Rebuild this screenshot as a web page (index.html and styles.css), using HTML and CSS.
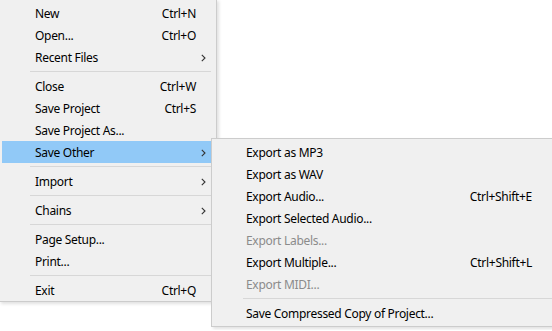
FILE: index.html
```html
<!DOCTYPE html>
<html lang="en">

<head>
    <meta charset="UTF-8">
    <title>File Menu</title>
    <link rel="stylesheet" href="styles.css">
</head>

<body>
    <div class="menu-area">
        <div class="menu main-menu">
            <div class="item"><span class="label">New</span><span class="keys">Ctrl+N</span><span class="arrow"></span></div>
            <div class="item"><span class="label">Open...</span><span class="keys">Ctrl+O</span><span class="arrow"></span></div>
            <div class="item"><span class="label">Recent Files</span><span class="keys"></span><span class="arrow"><svg width="5" height="8" viewBox="0 0 5 8"><path d="M0.8 0.8 L4 4 L0.8 7.2" fill="none" stroke="#333" stroke-width="1.1"/></svg></span></div>
            <div class="sep"></div>
            <div class="item"><span class="label">Close</span><span class="keys">Ctrl+W</span><span class="arrow"></span></div>
            <div class="item"><span class="label">Save Project</span><span class="keys">Ctrl+S</span><span class="arrow"></span></div>
            <div class="item"><span class="label">Save Project As...</span><span class="keys"></span><span class="arrow"></span></div>
            <div class="item active"><span class="label">Save Other</span><span class="keys"></span><span class="arrow"><svg width="5" height="8" viewBox="0 0 5 8"><path d="M0.8 0.8 L4 4 L0.8 7.2" fill="none" stroke="#333" stroke-width="1.1"/></svg></span></div>
            <div class="sep"></div>
            <div class="item"><span class="label">Import</span><span class="keys"></span><span class="arrow"><svg width="5" height="8" viewBox="0 0 5 8"><path d="M0.8 0.8 L4 4 L0.8 7.2" fill="none" stroke="#333" stroke-width="1.1"/></svg></span></div>
            <div class="sep"></div>
            <div class="item"><span class="label">Chains</span><span class="keys"></span><span class="arrow"><svg width="5" height="8" viewBox="0 0 5 8"><path d="M0.8 0.8 L4 4 L0.8 7.2" fill="none" stroke="#333" stroke-width="1.1"/></svg></span></div>
            <div class="sep"></div>
            <div class="item"><span class="label">Page Setup...</span><span class="keys"></span><span class="arrow"></span></div>
            <div class="item"><span class="label">Print...</span><span class="keys"></span><span class="arrow"></span></div>
            <div class="sep"></div>
            <div class="item"><span class="label">Exit</span><span class="keys">Ctrl+Q</span><span class="arrow"></span></div>
        </div>

        <div class="menu sub-menu">
            <div class="item"><span class="label">Export as MP3</span><span class="keys"></span></div>
            <div class="item"><span class="label">Export as WAV</span><span class="keys"></span></div>
            <div class="item"><span class="label">Export Audio...</span><span class="keys">Ctrl+Shift+E</span></div>
            <div class="item"><span class="label">Export Selected Audio...</span><span class="keys"></span></div>
            <div class="item disabled"><span class="label">Export Labels...</span><span class="keys"></span></div>
            <div class="item"><span class="label">Export Multiple...</span><span class="keys">Ctrl+Shift+L</span></div>
            <div class="item disabled"><span class="label">Export MIDI...</span><span class="keys"></span></div>
            <div class="sep"></div>
            <div class="item"><span class="label">Save Compressed Copy of Project...</span><span class="keys"></span></div>
        </div>
    </div>
</body>

</html>
```

FILE: styles.css
```css
body {
    margin: 0;
    background-color: #fff;
    font-family: "Noto Sans", Arial, sans-serif;
    font-size: 12px;
    letter-spacing: -0.3px;
    color: #000;
    overflow: hidden;
}

.menu-area {
    position: relative;
    width: 552px;
    height: 331px;
}

.menu {
    background-color: #f0f0f0;
    border: 1px solid #ccc;
    box-sizing: border-box;
}

.main-menu {
    width: 218px;
    margin-left: -1px;
    margin-top: -1px;
    padding: 3px 5px 0 3px;
    border-top: none;
    border-left: none;
    box-shadow: 2px 2px 3px rgba(0, 0, 0, 0.12);
}

.sub-menu {
    position: absolute;
    left: 211px;
    top: 139px;
    width: 345px;
    padding: 2px;
    box-shadow: 2px 2px 3px rgba(0, 0, 0, 0.12);
}

.item {
    display: flex;
    align-items: center;
    box-sizing: border-box;
    height: 22px;
    padding-top: 1px;
    padding-left: 33px;
}

.sub-menu .item {
    padding-left: 32px;
    padding-right: 21px;
}

.item.active {
    background-color: #91c9f7;
}

.item.disabled {
    color: #8b8b8b;
}

.label {
    flex: 1;
    white-space: nowrap;
}

.keys {
    white-space: nowrap;
}

.arrow {
    width: 15px;
    display: flex;
    justify-content: flex-end;
    padding-right: 5px;
    box-sizing: border-box;
}

.sep {
    height: 7px;
    display: flex;
    align-items: center;
    margin-left: 28px;
}

.sep::after {
    content: "";
    flex: 1;
    height: 1px;
    background-color: #d7d7d7;
}

.sub-menu .sep {
    margin-left: 29px;
}
```
